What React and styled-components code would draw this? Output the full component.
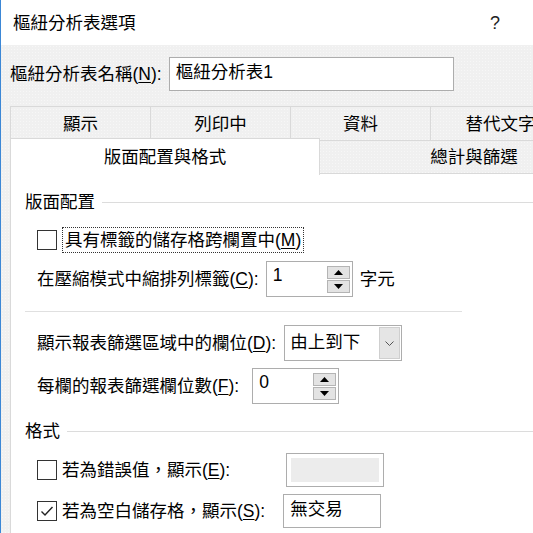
import React from 'react';
import styled, { createGlobalStyle } from 'styled-components';

const GlobalStyle = createGlobalStyle`
  html, body {
    margin: 0;
    padding: 0;
    width: 533px;
    height: 533px;
    overflow: hidden;
    background: #fff;
  }

  body {
    font-family: "Liberation Sans", "Noto Sans CJK TC", sans-serif;
    font-size: 17.5px;
    line-height: 24px;
    color: #000;
  }
`;

const Window = styled.div`
  display: flex;
  flex-direction: column;
  width: 533px;
  height: 533px;
  box-sizing: border-box;
  border-left: 1px solid #3b87d6;
  overflow: hidden;
`;

const TitleBar = styled.div`
  display: flex;
  align-items: center;
  justify-content: space-between;
  height: 45px;
  flex-shrink: 0;
  padding: 0 33px 0 12px;
  background: #fff;
`;

const Help = styled.span`
  font-size: 18px;
  color: #222;
`;

const Body = styled.div`
  flex: 1;
  display: flex;
  flex-direction: column;
  min-height: 0;
  padding-left: 9px;
  background-color: #f0f0f0;
  background-image: radial-gradient(#f7f7f7 0.6px, transparent 0.7px);
  background-size: 3px 3px;
`;

const NameRow = styled.div`
  display: flex;
  align-items: center;
  padding: 12px 0 15px;
`;

const Field = styled.div`
  box-sizing: border-box;
  width: ${(p) => p.$width}px;
  height: ${(p) => p.$height || 34}px;
  margin-left: ${(p) => p.$gap || 0}px;
  padding: ${(p) => (p.$disabled ? '4px' : '2px 6px')};
  border: 1px solid #adadad;
  background: #fff;
  flex-shrink: 0;
`;

const Key = styled.u`
  text-underline-offset: 2px;
`;

const TabRow = styled.div`
  display: flex;
  height: 34px;
  flex-shrink: 0;
`;

const Tab = styled.div`
  position: relative;
  display: flex;
  align-items: center;
  justify-content: center;
  box-sizing: border-box;
  flex-shrink: 0;
  width: ${(p) => p.$width}px;
  height: ${(p) => (p.$selected ? 37 : 34)}px;
  margin-top: ${(p) => (p.$selected ? -2 : 0)}px;
  margin-right: -1px;
  border: 1px solid #d9d9d9;
  border-bottom: ${(p) => (p.$top || p.$selected ? 'none' : '1px solid #d9d9d9')};
  background: ${(p) => (p.$selected ? '#fff' : 'transparent')};
  white-space: nowrap;
  z-index: ${(p) => (p.$selected ? 1 : 0)};
`;

const Panel = styled.div`
  flex: 1;
  box-sizing: border-box;
  padding: 16px 0 0 14px;
  border-left: 1px solid #d9d9d9;
  border-top: 1px solid #d9d9d9;
  margin-top: -1px;
  background: #fff;
`;

const SectionHeader = styled.div`
  display: flex;
  align-items: center;
  gap: 7px;
  height: 24px;
  margin-top: ${(p) => p.$top || 0}px;

  &::after {
    content: '';
    flex: 1;
    height: 1px;
    background: #dcdcdc;
  }
`;

const Row = styled.div`
  display: flex;
  align-items: center;
  height: ${(p) => p.$height || 36}px;
  margin: ${(p) => p.$top || 0}px 0 0 12px;
`;

const Box = styled.span`
  display: flex;
  align-items: center;
  justify-content: center;
  box-sizing: border-box;
  width: 20px;
  height: 20px;
  margin-right: 5px;
  border: 1px solid #333;
  background: #fff;
  flex-shrink: 0;
`;

const FocusLabel = styled.span`
  padding: 0 2px;
  border: 1px dotted #333;
  line-height: 24px;
`;

const Divider = styled.div`
  width: 437px;
  height: 1px;
  margin: 14px 0 13px;
  background: #e0e0e0;
`;

const SpinBox = styled.div`
  display: flex;
  box-sizing: border-box;
  width: ${(p) => p.$width}px;
  height: 36px;
  margin-left: ${(p) => p.$gap}px;
  border: 1px solid #adadad;
  background: #fff;
  flex-shrink: 0;
`;

const SpinValue = styled.span`
  flex: 1;
  padding: 1px 0 0 6px;
`;

const SpinButtons = styled.div`
  display: flex;
  flex-direction: column;
  gap: 1px;
  padding: 4px 2px 0 0;
`;

const SpinButton = styled.div`
  display: flex;
  align-items: center;
  justify-content: center;
  box-sizing: border-box;
  width: 23px;
  height: 13px;
  border: 1px solid #b4b4b4;
  background: #e3e3e3;
`;

const Select = styled.div`
  display: flex;
  box-sizing: border-box;
  width: 118px;
  height: 36px;
  margin-left: ${(p) => p.$gap}px;
  border: 1px solid #adadad;
  background: #fff;
`;

const SelectValue = styled.span`
  flex: 1;
  padding: 4px 0 0 5px;
`;

const SelectButton = styled.div`
  display: flex;
  align-items: center;
  justify-content: center;
  box-sizing: border-box;
  width: 21px;
  margin: 1px 1px 1px 0;
  border: 1px solid #cfcfcf;
  background: #e5e5e5;
`;

const Suffix = styled.span`
  margin-left: 7px;
`;

const DisabledFill = styled.div`
  height: 100%;
  background: #ececec;
`;

const Triangle = ({ up }) => (
  <svg width="9" height="5" viewBox="0 0 9 5">
    <polygon points={up ? '0,5 9,5 4.5,0' : '0,0 9,0 4.5,5'} fill="#000" />
  </svg>
);

const Spinner = ({ value, width, gap }) => (
  <SpinBox $width={width} $gap={gap}>
    <SpinValue>{value}</SpinValue>
    <SpinButtons>
      <SpinButton><Triangle up /></SpinButton>
      <SpinButton><Triangle /></SpinButton>
    </SpinButtons>
  </SpinBox>
);

const Check = ({ checked }) => (
  <Box>
    {checked && (
      <svg width="14" height="12" viewBox="0 0 14 12">
        <path d="M1.5 6.5 L5 10 L12.5 2" fill="none" stroke="#222" strokeWidth="1.4" />
      </svg>
    )}
  </Box>
);

export default function App() {
  return (
    <>
      <GlobalStyle />
      <Window>
        <TitleBar>
          <span>樞紐分析表選項</span>
          <Help>?</Help>
        </TitleBar>
        <Body>
          <NameRow>
            <span>樞紐分析表名稱(<Key>N</Key>):</span>
            <Field $width={285} $gap={7}>樞紐分析表1</Field>
          </NameRow>

          <TabRow>
            <Tab $top $width={141}>顯示</Tab>
            <Tab $top $width={141}>列印中</Tab>
            <Tab $top $width={141}>資料</Tab>
            <Tab $top $width={141}>替代文字</Tab>
          </TabRow>
          <TabRow>
            <Tab $selected $width={310}>版面配置與格式</Tab>
            <Tab $width={310}>總計與篩選</Tab>
          </TabRow>

          <Panel>
            <SectionHeader>版面配置</SectionHeader>
            <Row $height={26} $top={13}>
              <Check />
              <FocusLabel>具有標籤的儲存格跨欄置中(<Key>M</Key>)</FocusLabel>
            </Row>
            <Row $top={8}>
              <span>在壓縮模式中縮排列標籤(<Key>C</Key>):</span>
              <Spinner value="1" width={87} gap={7} />
              <Suffix>字元</Suffix>
            </Row>
            <Divider />
            <Row>
              <span>顯示報表篩選區域中的欄位(<Key>D</Key>):</span>
              <Select $gap={8}>
                <SelectValue>由上到下</SelectValue>
                <SelectButton>
                  <svg width="9" height="5" viewBox="0 0 9 5">
                    <path d="M0.5 0.5 L4.5 4.5 L8.5 0.5" fill="none" stroke="#555" strokeWidth="1" />
                  </svg>
                </SelectButton>
              </Select>
            </Row>
            <Row $top={7}>
              <span>每欄的報表篩選欄位數(<Key>F</Key>):</span>
              <Spinner value="0" width={87} gap={13} />
            </Row>

            <SectionHeader $top={15}>格式</SectionHeader>
            <Row $height={34} $top={10}>
              <Check />
              <span>若為錯誤值，顯示(<Key>E</Key>):</span>
              <Field $disabled $width={98} $gap={56}>
                <DisabledFill />
              </Field>
            </Row>
            <Row $height={34} $top={7}>
              <Check checked />
              <span>若為空白儲存格，顯示(<Key>S</Key>):</span>
              <Field $width={98} $gap={18}>無交易</Field>
            </Row>
          </Panel>
        </Body>
      </Window>
    </>
  );
}
